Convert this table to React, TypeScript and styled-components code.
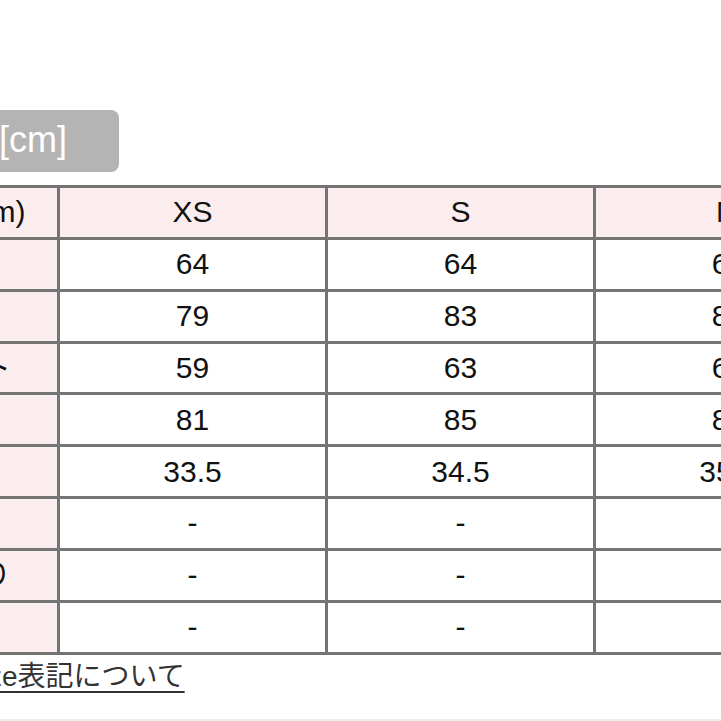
import React from 'react'
import styled, { createGlobalStyle } from 'styled-components'

const GlobalStyle = createGlobalStyle`
  html, body {
    margin: 0;
    padding: 0;
    background: #ffffff;
    overflow: hidden;
  }
`

const rows = [
  { label: '着丈', values: ['64', '64', '66', '66'] },
  { label: 'バスト', values: ['79', '83', '87', '91'] },
  { label: 'ウエスト', values: ['59', '63', '67', '71'] },
  { label: 'ヒップ', values: ['81', '85', '89', '93'] },
  { label: '股上', values: ['33.5', '34.5', '35.5', '36.5'] },
  { label: '股下', values: ['-', '-', '-', '-'] },
  { label: 'もも周り', values: ['-', '-', '-', '-'] },
  { label: '裾幅', values: ['-', '-', '-', '-'] },
]

const sizes = ['XS', 'S', 'M', 'L']

const App: React.FC = () => {
  return (
    <Page>
      <GlobalStyle />
      <Badge>サイズ[cm]</Badge>
      <SizeTable>
        <colgroup>
          <col style={{ width: 215 }} />
          {sizes.map((s) => (
            <col key={s} style={{ width: 268 }} />
          ))}
        </colgroup>
        <thead>
          <tr>
            <HeadCell>サイズ(cm)</HeadCell>
            {sizes.map((s) => (
              <HeadCell key={s}>{s}</HeadCell>
            ))}
          </tr>
        </thead>
        <tbody>
          {rows.map((row) => (
            <tr key={row.label}>
              <LabelCell>{row.label}</LabelCell>
              {row.values.map((v, i) => (
                <ValueCell key={i}>{v}</ValueCell>
              ))}
            </tr>
          ))}
        </tbody>
      </SizeTable>
      <GuideLink href="#">Size表記について</GuideLink>
    </Page>
  )
}

export default App

const Page = styled.div`
  width: 721px;
  height: 721px;
  box-sizing: border-box;
  overflow: hidden;
  padding-top: 110px;
  border-bottom: 2px solid #ececec;
  font-family: 'Liberation Sans', 'Noto Sans CJK JP', sans-serif;
  color: #111111;
`

const Badge = styled.div`
  width: 280px;
  height: 62px;
  margin-left: -161px;
  box-sizing: border-box;
  padding-right: 52px;
  border-radius: 8px;
  background: #b4b4b4;
  color: #ffffff;
  font-size: 36px;
  line-height: 60px;
  text-align: right;
`

const SizeTable = styled.table`
  margin-top: 13px;
  margin-left: -158px;
  border-collapse: collapse;
  table-layout: fixed;
  width: 1287px;
  font-size: 30px;
`

const Cell = styled.td`
  height: 48.85px;
  padding: 0;
  border: 3px solid #747474;
  text-align: center;
  vertical-align: middle;
  white-space: nowrap;
  line-height: 1;
`

const HeadCell = styled(Cell).attrs({ as: 'th' })`
  background: #fbeded;
  font-weight: normal;
`

const LabelCell = styled(Cell)`
  background: #fbeded;
`

const ValueCell = styled(Cell)`
  background: #ffffff;
`

const GuideLink = styled.a`
  display: inline-block;
  margin-left: -37px;
  margin-top: 2px;
  font-size: 28px;
  line-height: 40px;
  color: #333333;
  text-decoration: underline;
  text-underline-offset: 5px;
  text-decoration-thickness: 2px;
`
